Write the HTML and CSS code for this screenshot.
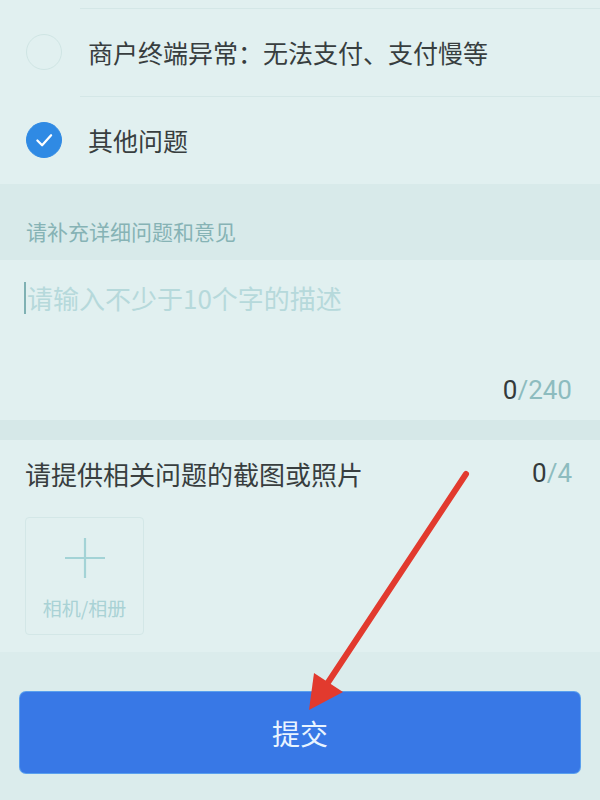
FILE: index.html
```html
<!DOCTYPE html>
<html lang="zh-CN">
<head>
<meta charset="utf-8">
<title>问题反馈</title>
<link rel="stylesheet" href="styles.css">
</head>
<body>
<div class="page">
  <div class="options">
    <div class="option">
      <span class="radio"></span>
      <span class="option-text">商户终端异常：无法支付、支付慢等</span>
    </div>
    <div class="option">
      <span class="radio checked">
        <svg viewBox="0 0 36 36" width="36" height="36"><path d="M11 18.5 L16 23.5 L25.5 13" fill="none" stroke="#ffffff" stroke-width="2.4" stroke-linecap="round" stroke-linejoin="round"/></svg>
      </span>
      <span class="option-text">其他问题</span>
    </div>
  </div>

  <div class="label-band">请补充详细问题和意见</div>

  <div class="textarea">
    <div class="placeholder"><span class="caret"></span>请输入不少于10个字的描述</div>
    <div class="counter"><span class="count-now">0</span>/240</div>
  </div>

  <div class="gap"></div>

  <div class="photos">
    <div class="photos-head">
      <span class="photos-title">请提供相关问题的截图或照片</span>
      <span class="counter small"><span class="count-now">0</span>/4</span>
    </div>
    <div class="upload">
      <svg class="plus" viewBox="0 0 40 40" width="40" height="40"><path d="M20 0 V40 M0 20 H40" stroke="#a3d3d6" stroke-width="2.2" fill="none"/></svg>
      <span class="upload-text">相机/相册</span>
    </div>
  </div>

  <div class="footer">
    <button class="submit">提交</button>
  </div>

  <svg class="arrow" viewBox="0 0 600 800" width="600" height="800">
    <line x1="466" y1="474" x2="327" y2="684" stroke="#e23a2e" stroke-width="6" stroke-linecap="round"/>
    <polygon points="309,710 314,673 343,692" fill="#e23a2e"/>
  </svg>
</div>
</body>
</html>
```

FILE: styles.css
```css
* { box-sizing: border-box; }
html, body {
  margin: 0;
  padding: 0;
  background: #dbecec;
}
body {
  font-family: "Noto Sans CJK SC", "Noto Sans", sans-serif;
  color: #333a3b;
}
.page {
  position: relative;
  width: 600px;
  height: 800px;
  overflow: hidden;
}
.options {
  background: #e1f0f0;
  padding-top: 8px;
}
.option {
  display: flex;
  align-items: center;
  height: 88px;
  padding-left: 26px;
  position: relative;
}
.option::before {
  content: "";
  position: absolute;
  top: 0;
  left: 80px;
  right: 0;
  height: 1px;
  background: #d4e7e7;
}
.radio {
  width: 36px;
  height: 36px;
  border-radius: 50%;
  border: 1.5px solid #cfe5e4;
  flex: none;
  display: flex;
  align-items: center;
  justify-content: center;
}
.radio.checked {
  background: #2f8ae4;
  border-color: #2f8ae4;
}
.radio svg { display: block; }
.option-text {
  margin-left: 26px;
  font-size: 25px;
  color: #383e3f;
}
.label-band {
  background: #d8eaea;
  height: 76px;
  padding: 34px 0 0 26px;
  font-size: 21px;
  line-height: 26px;
  color: #86b3b5;
}
.textarea {
  background: #e1f0f0;
  height: 160px;
  padding: 20px 28px 0 24px;
  position: relative;
}
.placeholder {
  font-size: 26px;
  line-height: 36px;
  color: #b6d9db;
  display: flex;
  align-items: center;
}
.caret {
  display: inline-block;
  width: 2px;
  height: 32px;
  background: #7fb1b3;
  margin-right: 1px;
}
.counter {
  position: absolute;
  right: 28px;
  bottom: 14px;
  font-family: Roboto, "Noto Sans", sans-serif;
  font-size: 26px;
  line-height: 32px;
  color: #8dbcbf;
}
.counter.small {
  position: static;
}
.count-now { color: #343a3b; }
.gap {
  height: 20px;
  background: #d6e8e8;
}
.photos {
  background: #e1f0f0;
  height: 212px;
  padding: 16px 28px 0 25px;
}
.photos-head {
  display: flex;
  justify-content: space-between;
  align-items: center;
  height: 34px;
}
.photos-title {
  font-size: 26px;
  color: #383e3f;
}
.upload {
  margin-top: 27px;
  width: 119px;
  height: 118px;
  border: 1.5px solid #d3e7e7;
  border-radius: 4px;
  display: flex;
  flex-direction: column;
  align-items: center;
  padding-top: 20px;
}
.upload-text {
  margin-top: 18px;
  font-size: 19px;
  line-height: 24px;
  color: #a9d2d5;
}
.footer {
  padding: 40px 20px 0;
}
.submit {
  display: block;
  width: 560px;
  height: 81px;
  border: none;
  border-radius: 6px;
  background: #3878e6;
  color: #e9f4ff;
  font-family: "Noto Sans CJK SC", sans-serif;
  font-size: 28px;
  box-shadow: 0 0 0 1px #5aa0ee;
}
.arrow {
  position: absolute;
  left: 0;
  top: 0;
  pointer-events: none;
}
```
